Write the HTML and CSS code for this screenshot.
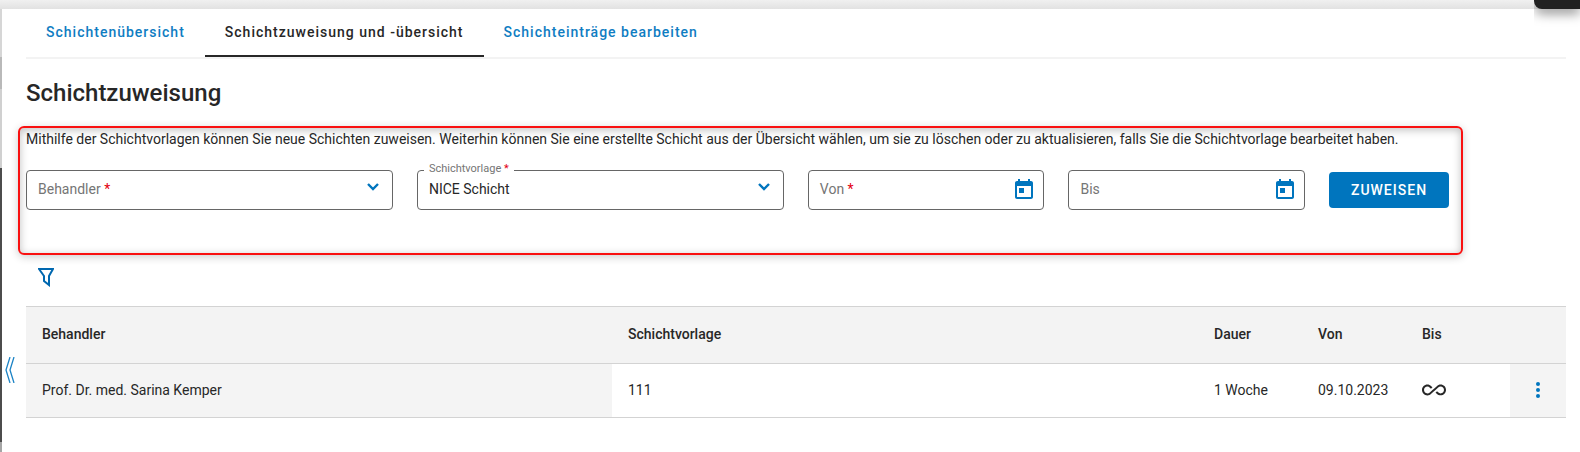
FILE: index.html
```
<!DOCTYPE html>
<html lang="de">
<head>
    <meta charset="UTF-8">
    <meta name="viewport" content="width=device-width, initial-scale=1.0">
    <title>Schichtzuweisung</title>
    <link rel="stylesheet" href="styles.css">
</head>
<body>
    <main class="sheet">
        <nav class="tabs">
            <a class="tab" href="#uebersicht">Schichtenübersicht</a>
            <a class="tab active" href="#zuweisung" aria-current="page">Schichtzuweisung und -übersicht</a>
            <a class="tab" href="#bearbeiten">Schichteinträge bearbeiten</a>
        </nav>

        <h1>Schichtzuweisung</h1>

        <section class="highlight">
            <p>Mithilfe der Schichtvorlagen können Sie neue Schichten zuweisen. Weiterhin können Sie eine erstellte Schicht aus der Übersicht wählen, um sie zu löschen oder zu aktualisieren, falls Sie die Schichtvorlage bearbeitet haben.</p>
            <form class="assign-form">
                <div class="field wide">
                    <label for="behandler">Behandler <span class="required">*</span></label>
                    <select id="behandler" required>
                        <option value=""></option>
                    </select>
                    <svg class="chevron" viewBox="0 0 12 8"><path d="M1 1l5 5 5-5"/></svg>
                </div>
                <div class="field wide filled">
                    <label for="vorlage">Schichtvorlage <span class="required">*</span></label>
                    <select id="vorlage" required>
                        <option>NICE Schicht</option>
                    </select>
                    <svg class="chevron" viewBox="0 0 12 8"><path d="M1 1l5 5 5-5"/></svg>
                </div>
                <div class="field">
                    <label for="von">Von <span class="required">*</span></label>
                    <input type="text" id="von" required>
                    <button type="button" class="calendar" aria-label="Kalender">
                        <svg viewBox="0 0 24 24"><path d="M19 3h-1V1h-2v2H8V1H6v2H5c-1.1 0-2 .9-2 2v14c0 1.1.9 2 2 2h14c1.1 0 2-.9 2-2V5c0-1.1-.9-2-2-2zm0 16H5V8h14v11zM7 10h5v5H7z"/></svg>
                    </button>
                </div>
                <div class="field">
                    <label for="bis">Bis</label>
                    <input type="text" id="bis">
                    <button type="button" class="calendar" aria-label="Kalender">
                        <svg viewBox="0 0 24 24"><path d="M19 3h-1V1h-2v2H8V1H6v2H5c-1.1 0-2 .9-2 2v14c0 1.1.9 2 2 2h14c1.1 0 2-.9 2-2V5c0-1.1-.9-2-2-2zm0 16H5V8h14v11zM7 10h5v5H7z"/></svg>
                    </button>
                </div>
                <button type="submit" class="submit">ZUWEISEN</button>
            </form>
        </section>

        <button type="button" class="filter" aria-label="Filter">
            <svg viewBox="0 0 16 20"><path d="M1 2h14l-4 7v9l-5-4V9z"/></svg>
        </button>

        <table class="shifts">
            <colgroup>
                <col>
                <col>
                <col class="small">
                <col class="small">
                <col class="small">
                <col class="menu">
            </colgroup>
            <thead>
                <tr>
                    <th>Behandler</th>
                    <th>Schichtvorlage</th>
                    <th>Dauer</th>
                    <th>Von</th>
                    <th>Bis</th>
                    <th></th>
                </tr>
            </thead>
            <tbody>
                <tr>
                    <td class="shaded">Prof. Dr. med. Sarina Kemper</td>
                    <td>111</td>
                    <td>1 Woche</td>
                    <td>09.10.2023</td>
                    <td>
                        <svg class="infinity" viewBox="0 0 24 24"><path d="M18.6 6.62c-1.44 0-2.8.56-3.77 1.53L12 10.66 10.48 12h.01L7.8 14.39c-.64.64-1.49.99-2.4.99-1.87 0-3.39-1.51-3.39-3.38S3.53 8.62 5.4 8.62c.91 0 1.76.35 2.44 1.03l1.13 1 1.51-1.34L9.22 8.2C8.2 7.18 6.84 6.62 5.4 6.62 2.42 6.62 0 9.04 0 12s2.42 5.38 5.4 5.38c1.44 0 2.8-.56 3.77-1.53l2.83-2.5.01.01L13.52 12h-.01l2.69-2.39c.64-.64 1.49-.99 2.4-.99 1.87 0 3.39 1.51 3.39 3.38s-1.52 3.38-3.39 3.38c-.9 0-1.76-.35-2.44-1.03l-1.14-1.01-1.51 1.34 1.27 1.12c1.02 1.01 2.37 1.57 3.82 1.57 2.98 0 5.4-2.41 5.4-5.38s-2.42-5.37-5.4-5.37z"/></svg>
                    </td>
                    <td class="shaded">
                        <button type="button" class="more" aria-label="Aktionen">
                            <svg viewBox="0 0 24 24"><circle cx="12" cy="6" r="2"/><circle cx="12" cy="12" r="2"/><circle cx="12" cy="18" r="2"/></svg>
                        </button>
                    </td>
                </tr>
            </tbody>
        </table>

        <button type="button" class="collapse" aria-label="Einklappen">
            <svg viewBox="0 0 10 26"><path d="M5 0L1 13l4 13M9 0L5 13l4 13"/></svg>
        </button>
    </main>
    <div class="corner"><div class="corner-box"></div></div>
</body>
</html>
```

FILE: styles.css
```
* {
    box-sizing: border-box;
}

body {
    margin: 0;
    min-height: 100vh;
    padding: 9px 0 0 2px;
    overflow: hidden;
    font-family: Roboto, Arial, sans-serif;
    font-size: 14px;
    line-height: 20px;
    color: #272727;
    /* dimmed page behind the sheet, seen along the left and top edges */
    background:
        linear-gradient(#d6d6d6 0 48px, #b9b9b9 48px 80px, #d0d0d0 80px 159px, #4c4c4c 159px 433px, #a5a5a5 433px) 0 9px / 2px 100% no-repeat,
        linear-gradient(#f0f0f0, #e2e2e2) 0 0 / 100% 9px no-repeat;
}

button {
    font-family: inherit;
    border: none;
    padding: 0;
    background: none;
    cursor: pointer;
}

svg {
    display: block;
}

.sheet {
    position: relative;
    min-height: calc(100vh - 9px);
    padding: 0 14px 0 24px;
    background-color: #fff;
    border-top-left-radius: 3px;
}

.tabs {
    display: flex;
    border-bottom: 2px solid #f3f3f3;
}

.tab {
    padding: 13px 20px;
    border-bottom: 2px solid transparent;
    color: #0f7dc2;
    font-weight: 500;
    letter-spacing: 1px;
    text-decoration: none;
}

.tab.active {
    color: #272727;
    border-bottom-color: #272727;
}

h1 {
    margin: 18px 0 17px;
    font-size: 24px;
    line-height: 32px;
    font-weight: 500;
}

.highlight {
    margin: 0 103px 0 -8px;
    padding: 1px 12px 43px 6px;
    border: 2px solid #f91010;
    border-radius: 6px;
    box-shadow: 0 2px 8px rgba(0, 0, 0, 0.2), inset 0 2px 8px rgba(0, 0, 0, 0.25);
}

.highlight p {
    margin: 0 0 21px;
}

.assign-form {
    display: flex;
    align-items: center;
    gap: 24px;
}

.field {
    position: relative;
    flex: 9;
    display: flex;
    align-items: center;
    height: 40px;
    border: 1px solid #666;
    border-radius: 4px;
}

.field.wide {
    flex: 14;
}

.field label {
    position: absolute;
    left: 11px;
    top: 8px;
    color: #757575;
    pointer-events: none;
}

.field.filled label {
    left: 6px;
    top: -10px;
    padding: 0 5px;
    font-size: 11px;
    line-height: 16px;
    background-color: #fff;
}

.field .required {
    color: #e3000f;
}

.field select,
.field input {
    flex: 1;
    min-width: 0;
    height: 38px;
    padding: 0 11px 2px;
    border: none;
    outline: none;
    appearance: none;
    background: none;
    font: inherit;
    color: inherit;
}

.chevron {
    position: absolute;
    right: 13px;
    top: 12px;
    width: 12px;
    height: 8px;
    fill: none;
    stroke: #0075be;
    stroke-width: 2.4;
    pointer-events: none;
}

.calendar {
    margin-right: 7px;
}

.calendar svg,
.infinity,
.more svg {
    width: 24px;
    height: 24px;
}

.calendar svg,
.more svg {
    fill: #0075be;
}

.submit {
    width: 120px;
    height: 36px;
    border-radius: 4px;
    background-color: #0075be;
    color: #fff;
    font-size: 14px;
    font-weight: 500;
    letter-spacing: 1px;
}

.filter {
    display: block;
    margin: 12px 12px 19px;
}

.filter svg {
    width: 16px;
    height: 20px;
    fill: none;
    stroke: #0068b0;
    stroke-width: 2;
}

.shifts {
    width: 100%;
    table-layout: fixed;
    border-collapse: collapse;
    border-top: 1px solid #d3d3d3;
}

.shifts .small {
    width: 104px;
}

.shifts .menu {
    width: 56px;
}

.shifts th,
.shifts td {
    padding: 0 16px 2px;
    border-bottom: 1px solid #d3d3d3;
    text-align: left;
}

.shifts th {
    height: 57px;
    background-color: #f3f3f3;
    font-weight: 500;
}

.shifts td {
    height: 54px;
}

.shifts .shaded {
    background-color: #f4f4f4;
}

.infinity {
    fill: #272727;
}

.more {
    display: block;
}

.collapse {
    position: absolute;
    left: 3px;
    top: 348px;
}

.collapse svg {
    width: 10px;
    height: 26px;
    fill: none;
    stroke: #1c83c5;
    stroke-width: 1.3;
}

.corner {
    position: absolute;
    top: 0;
    right: 0;
    width: 46px;
    height: 32px;
    overflow: hidden;
}

.corner-box {
    height: 9px;
    border-bottom-left-radius: 8px;
    background-color: #212121;
    box-shadow: 0 4px 12px rgba(0, 0, 0, 0.5);
}
```
